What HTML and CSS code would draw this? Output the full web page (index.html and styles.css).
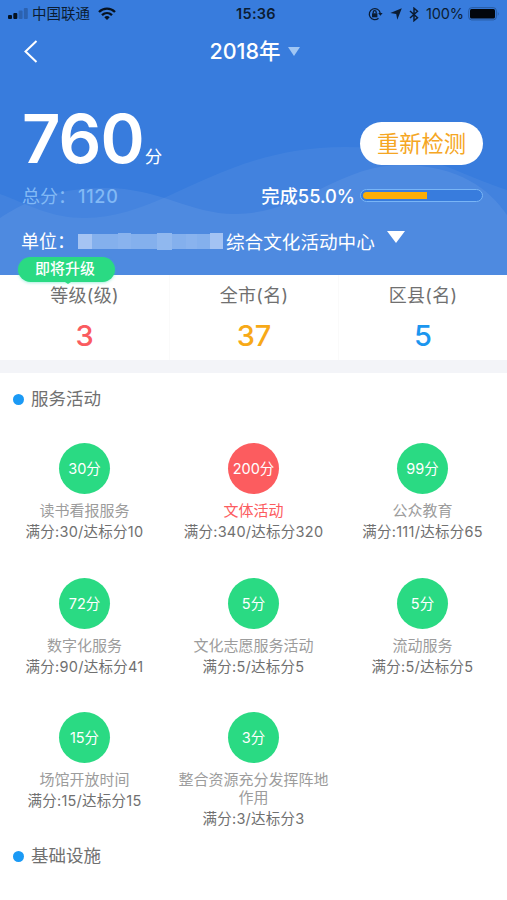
FILE: index.html
```html
<!DOCTYPE html>
<html lang="zh-CN">
<head>
    <meta charset="UTF-8">
    <meta name="viewport" content="width=device-width, initial-scale=1">
    <title>服务评估</title>
    <link rel="stylesheet" href="styles.css">
</head>
<body>
    <header class="header">
        <svg class="waves" viewBox="0 0 507 275" preserveAspectRatio="none">
            <path fill="#fff" fill-opacity=".05" d="M0 194 C30 205 50 218 85 218 C165 218 220 147 345 147 C420 147 460 175 507 190 V275 H0Z"/>
            <path fill="#fff" fill-opacity=".065" d="M0 218 C20 205 50 188 105 188 C160 188 190 214 235 214 C300 214 340 165 400 165 C460 165 490 190 507 215 V275 H0Z"/>
        </svg>

        <div class="statusbar">
            <div class="status-left">
                <svg width="20" height="12" viewBox="0 0 20 12">
                    <rect x="0" y="7" width="4" height="4" rx="1" fill="#061220"/>
                    <rect x="5.3" y="5" width="4" height="6" rx="1" fill="#061220"/>
                    <rect x="10.6" y="2.5" width="4" height="8.500" rx="1" fill="#2c62b0"/>
                    <rect x="15.800" y="0" width="4" height="11" rx="1" fill="#2c62b0"/>
                </svg>
                <span>中国联通</span>
                <svg class="wifi" width="18" height="14" viewBox="0 0 18 14" fill="none" stroke="#061220" stroke-width="2.300">
                    <path d="M1 5 C5.500 .5 12.500 .5 17 5"/>
                    <path d="M4 8.200 C7 5.300 11 5.300 14 8.200"/>
                    <path d="M6.300 10.200 Q9 8 11.700 10.200 L9 13Z" fill="#061220" stroke="none"/>
                </svg>
            </div>
            <div class="status-time">15:36</div>
            <div class="status-right">
                <svg width="15" height="14" viewBox="0 0 15 14" fill="none" stroke="#0b1c33" stroke-width="1.300">
                    <path d="M10.500 11.200 A5.500 5.500 0 1 1 12.200 6"/>
                    <path d="M10.200 6 H14.600 L12.400 8.800Z" fill="#0b1c33" stroke="none"/>
                    <rect x="4" y="6.300" width="5.400" height="4" fill="#0b1c33" stroke="none"/>
                    <path d="M5.200 6.500 V5.200 A1.500 1.500 0 0 1 8.200 5.200 V6.500"/>
                </svg>
                <svg class="loc" width="12" height="12" viewBox="0 0 12 12"><path fill="#0b1c33" d="M11.800 .3 L7.300 11.700 L6.200 6 L.3 5Z"/></svg>
                <svg class="bt" width="10" height="15" viewBox="0 0 10 15" fill="none" stroke="#0b1c33" stroke-width="1.500"><path d="M1 4 L8.500 10.800 L5 13.700 V1.200 L8.500 4.200 L1 11"/></svg>
                <span>100%</span>
                <svg class="battery" width="32" height="14" viewBox="0 0 32 14">
                    <rect x=".7" y=".7" width="27.600" height="12.200" rx="3" fill="none" stroke="#27599f"/>
                    <rect x="2" y="2" width="25" height="9.600" rx="1.500" fill="#02060c"/>
                    <path d="M29.800 4.500 Q31.500 6.800 29.800 9Z" fill="#27599f"/>
                </svg>
            </div>
        </div>

        <nav class="navbar">
            <svg class="back" width="14" height="23" viewBox="0 0 14 23"><path d="M12.500 1 L1.500 11.500 L12.500 22" fill="none" stroke="#fff" stroke-width="2"/></svg>
            <div class="year">2018年<svg width="12" height="9" viewBox="0 0 12 9"><path d="M0 0 H12 L6 9Z" fill="#a0c6f4"/></svg></div>
        </nav>

        <div class="score-row">
            <div class="score">760<span>分</span></div>
            <button class="retest" type="button">重新检测</button>
        </div>

        <div class="total-row">
            <div class="total">总分：<b>1120</b></div>
            <div class="progress">
                <span>完成55.0%</span>
                <div class="bar"><div class="bar-fill"></div></div>
            </div>
        </div>

        <div class="unit-row">
            <span class="unit-label">单位：</span>
            <svg class="mosaic" width="145" height="20" viewBox="0 0 145 20">
                <rect y="3" width="145" height="15" fill="#84b0ed"/>
                <path d="M0 3h14v15H0z" fill="#a5c4f3"/>
                <path d="M40 2h13v16H40zM108 3h11v15h-11z" fill="#89b3ee"/>
                <path d="M79 2h15v17H79z" fill="#90b8ef"/>
                <path d="M132 2h13v16h-13z" fill="#a3c3f3"/>
            </svg>
            <span>综合文化活动中心</span>
            <svg class="unit-arrow" width="18" height="12" viewBox="0 0 18 12"><path d="M0 0 H18 L9 12Z" fill="#fff"/></svg>
        </div>
    </header>

    <section class="ranks">
        <div class="rank">
            <div class="badge">即将升级</div>
            <div class="rank-name">等级(级)</div>
            <div class="rank-num red">3</div>
        </div>
        <div class="rank">
            <div class="rank-name">全市(名)</div>
            <div class="rank-num orange">37</div>
        </div>
        <div class="rank">
            <div class="rank-name">区县(名)</div>
            <div class="rank-num blue">5</div>
        </div>
    </section>

    <section class="group">
        <h2 class="group-title">服务活动</h2>
        <div class="grid">
            <div class="item">
                <div class="circle">30分</div>
                <div class="name">读书看报服务</div>
                <div class="detail">满分:30/达标分10</div>
            </div>
            <div class="item warn">
                <div class="circle">200分</div>
                <div class="name">文体活动</div>
                <div class="detail">满分:340/达标分320</div>
            </div>
            <div class="item">
                <div class="circle">99分</div>
                <div class="name">公众教育</div>
                <div class="detail">满分:111/达标分65</div>
            </div>
            <div class="item">
                <div class="circle">72分</div>
                <div class="name">数字化服务</div>
                <div class="detail">满分:90/达标分41</div>
            </div>
            <div class="item">
                <div class="circle">5分</div>
                <div class="name">文化志愿服务活动</div>
                <div class="detail">满分:5/达标分5</div>
            </div>
            <div class="item">
                <div class="circle">5分</div>
                <div class="name">流动服务</div>
                <div class="detail">满分:5/达标分5</div>
            </div>
            <div class="item">
                <div class="circle">15分</div>
                <div class="name">场馆开放时间</div>
                <div class="detail">满分:15/达标分15</div>
            </div>
            <div class="item">
                <div class="circle">3分</div>
                <div class="name">整合资源充分发挥阵地作用</div>
                <div class="detail">满分:3/达标分3</div>
            </div>
        </div>
    </section>

    <section class="group">
        <h2 class="group-title">基础设施</h2>
    </section>
</body>
</html>
```
FILE: styles.css
```css
* {
    box-sizing: border-box;
}
body {
    margin: 0;
    height: 900px;
    overflow: hidden;
    background: #fff;
    color: #707070;
    font-family: Inter, "Noto Sans CJK SC", sans-serif;
}
svg {
    display: block;
    flex: none;
}

/* header */
.header {
    position: relative;
    height: 275px;
    background: #387cdd;
    color: #fff;
}
.header > div,
.header > nav {
    position: relative;
}
.waves {
    position: absolute;
    left: 0;
    top: 0;
    width: 100%;
    height: 100%;
}
.statusbar {
    display: grid;
    grid-template-columns: 1fr auto 1fr;
    height: 28px;
    padding: 0 7px 0 8px;
    line-height: 28px;
    font-size: 14.5px;
    color: #0b1c33;
}
.status-left,
.status-right {
    display: flex;
    align-items: center;
}
.status-left span {
    margin: 0 8px 0 4px;
}
.status-right {
    justify-content: flex-end;
}
.status-time {
    padding-left: 4px;
    font-weight: 600;
    font-size: 14.5px;
    letter-spacing: 0.3px;
}
.loc {
    margin-left: 7px;
}
.bt {
    margin: 0 7px 0 7px;
}
.status-right span {
    letter-spacing: -0.1px;
}
.battery {
    margin-left: 4px;
}
.navbar {
    display: flex;
    justify-content: center;
    align-items: center;
    height: 46px;
}
.back {
    position: absolute;
    left: 24px;
    top: 12px;
}
.year {
    display: flex;
    align-items: center;
    gap: 7px;
    padding: 0 0 3px 2px;
    font-size: 21.5px;
    font-weight: 500;
}
.year svg {
    margin-top: 3px;
}
.score-row {
    display: flex;
    justify-content: space-between;
    height: 104px;
    padding: 26px 24px 0 22px;
}
.score {
    font-size: 67px;
    line-height: 78px;
    font-weight: 600;
    letter-spacing: -1px;
}
.score span {
    margin-left: 1px;
    font-size: 17.5px;
    font-weight: 400;
}
.retest {
    width: 123px;
    height: 43px;
    margin-top: 22px;
    padding: 0;
    border: 0;
    border-radius: 22px;
    background: #fff;
    color: #f5a623;
    font: 22.3px/43px Inter, "Noto Sans CJK SC", sans-serif;
}
.total-row {
    display: flex;
    justify-content: space-between;
    align-items: center;
    height: 34px;
    padding: 0 24px 0 22px;
}
.total {
    color: #82b9f5;
    font-size: 18px;
}
.total b {
    margin-left: 2px;
    font-weight: 500;
    letter-spacing: 0.7px;
}
.progress {
    display: flex;
    align-items: center;
    gap: 5px;
    font-size: 18.3px;
    font-weight: 500;
}
.bar {
    width: 123px;
    height: 13px;
    padding: 2px;
    border: 1px solid #79b5f6;
    border-radius: 7px;
    background: #387cdd;
    overflow: hidden;
}
.bar-fill {
    width: 55%;
    height: 7px;
    border-radius: 4px 0 0 4px;
    background: #fbad05;
}
.unit-row {
    display: flex;
    align-items: center;
    height: 56px;
    padding-left: 21px;
    font-size: 18.6px;
}
.unit-label {
    width: 57px;
    font-size: 18px;
}
.mosaic {
    margin: 2px 3px 0 0;
}
.unit-arrow {
    margin: -6px 0 0 12px;
}

/* ranks */
.ranks {
    display: grid;
    grid-template-columns: repeat(3, 1fr);
    height: 98px;
    border-bottom: 13px solid #f3f4f8;
}
.rank {
    position: relative;
    padding-top: 8px;
    text-align: center;
}
.rank + .rank {
    border-left: 1px solid #fafafa;
}
.rank-name {
    font-size: 18px;
    line-height: 26px;
    letter-spacing: 0.3px;
}
.rank-num {
    margin-top: 7px;
    font-size: 29px;
    line-height: 40px;
    font-weight: 500;
}
.red {
    color: #fa5b5f;
}
.orange {
    color: #f7a917;
}
.blue {
    color: #1b96ef;
}
.badge {
    position: absolute;
    left: 18px;
    top: -18px;
    width: 97px;
    height: 25px;
    padding-right: 3px;
    border-radius: 13px;
    background: #2ada83;
    box-shadow: 0 1px 3px rgba(42, 218, 180, 0.4);
    color: #fff;
    font-size: 15px;
    font-weight: 500;
    line-height: 24px;
}
.badge::after {
    content: "";
    position: absolute;
    left: 47px;
    top: 25px;
    border: 3px solid transparent;
    border-top: 2px solid #2ada83;
    border-bottom: 0;
}

/* score groups */
.group-title {
    display: flex;
    align-items: center;
    gap: 7px;
    height: 26px;
    margin: 0;
    padding-left: 13px;
    font-size: 17.5px;
    font-weight: 400;
    line-height: 26px;
}
.group-title::before {
    content: "";
    width: 11px;
    height: 11px;
    border-radius: 50%;
    background: #1b9af5;
}
.ranks + .group {
    padding-top: 13px;
}
.grid {
    display: grid;
    grid-template-columns: repeat(3, 1fr);
    grid-template-rows: 134.500px 134.500px 131px;
    padding-top: 31px;
}
.item {
    text-align: center;
}
.circle {
    width: 51px;
    height: 51px;
    margin: 0 auto 8px;
    border-radius: 50%;
    background: #2ada83;
    color: #fff;
    font-size: 14.5px;
    line-height: 52px;
    white-space: nowrap;
}
.name {
    width: 152px;
    margin: 0 auto;
    color: #9c9c9c;
    font-size: 15px;
    line-height: 17.500px;
}
.detail {
    margin-top: 1.5px;
    font-size: 14.5px;
    line-height: 21px;
    letter-spacing: 0.25px;
}
.warn .circle {
    background: #fc5c5f;
}
.warn .name {
    color: #fc5c5f;
}
```
